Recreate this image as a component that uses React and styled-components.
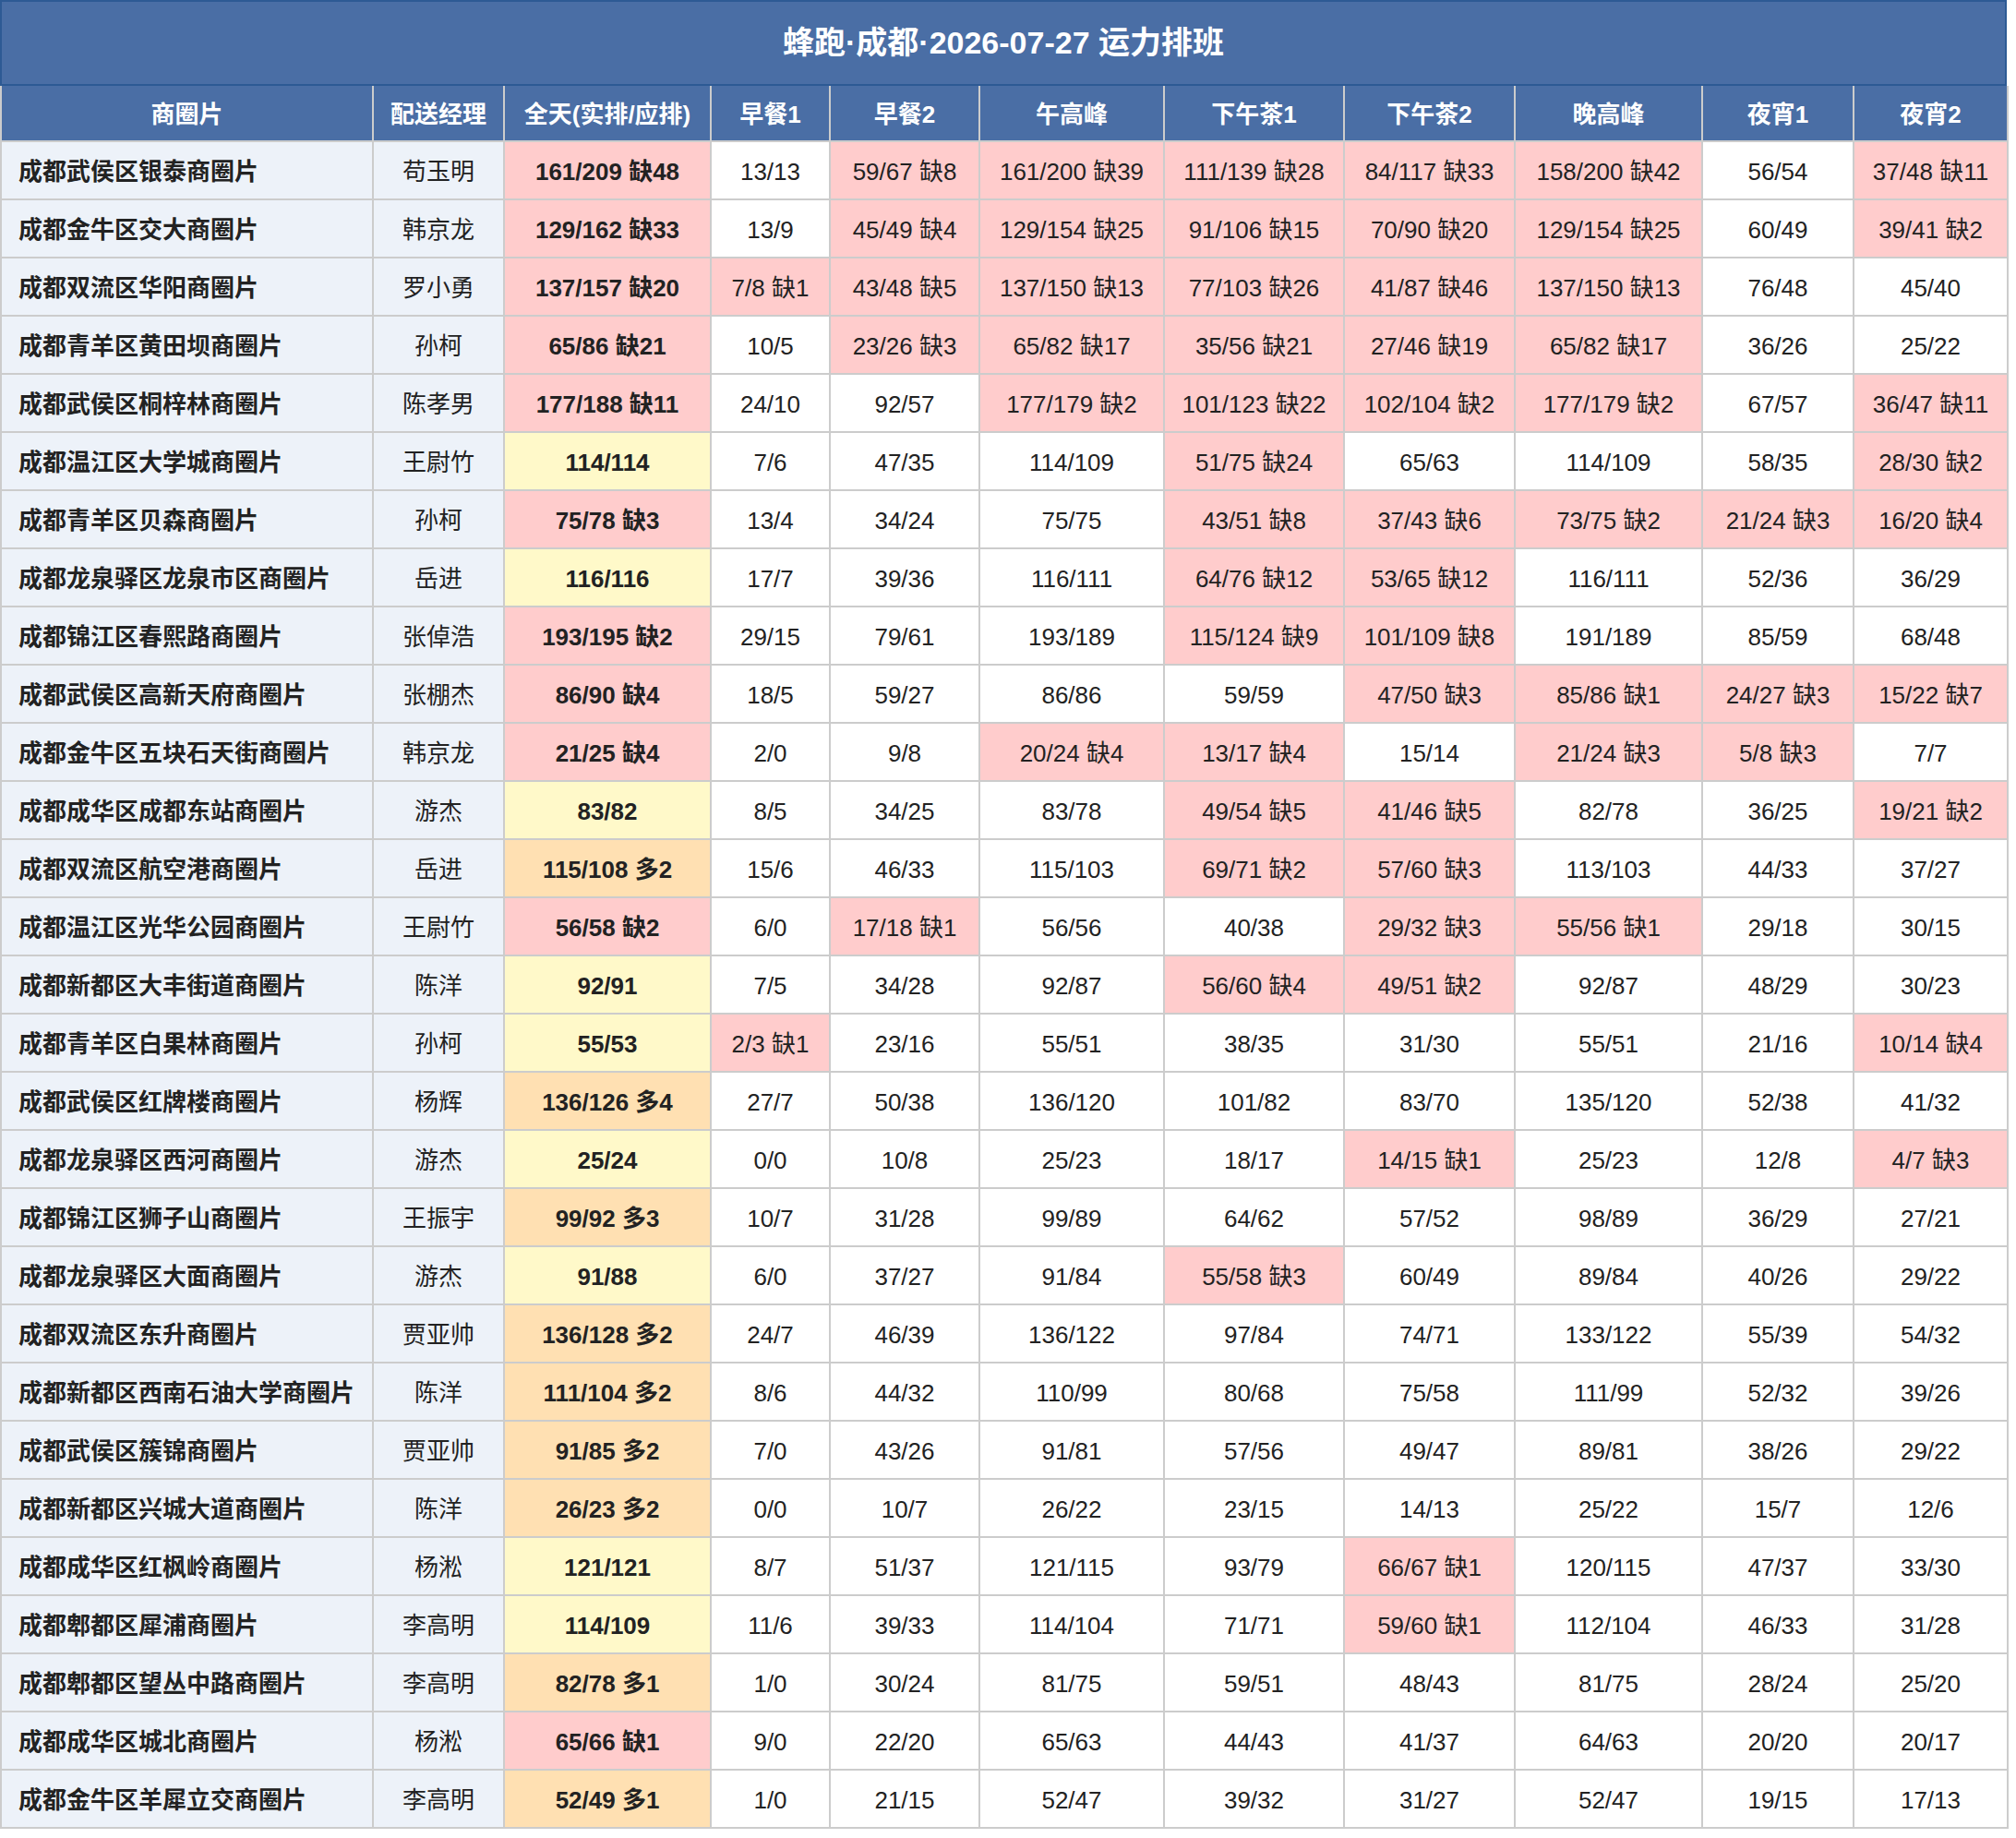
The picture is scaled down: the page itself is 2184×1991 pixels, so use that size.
import React from "react";
import styled, { createGlobalStyle } from "styled-components";

const Global = createGlobalStyle`
  html, body { margin: 0; padding: 0; background: #ffffff; }
  body { font-family: "Liberation Sans", "Noto Sans CJK SC", sans-serif; color: #222222; }
`;

const Sheet = styled.div`
  width: 2174px;
  display: flex;
  flex-direction: column;
`;

const Title = styled.div`
  box-sizing: border-box;
  height: 93px;
  display: flex;
  align-items: center;
  justify-content: center;
  background: #4a6ea5;
  border: 2px solid #2d5a94;
  color: #ffffff;
  font-size: 34px;
  line-height: 40px;
  font-weight: 700;
  padding-bottom: 2px;
`;

const Table = styled.table`
  width: 2174px;
  table-layout: fixed;
  border-collapse: collapse;
  font-size: 26px;
  line-height: 30px;
`;

const HeadCell = styled.th`
  height: 57px;
  padding: 2px 0 0;
  background: #4a6ea5;
  color: #ffffff;
  font-weight: 700;
  text-align: center;
  border: 2px solid #cccccc;
  border-top: none;
`;

const BG = {
  pink: "#ffcccc",
  yellow: "#fff9c9",
  orange: "#ffe0b2",
  side: "#edf2f9",
  plain: "#ffffff",
};

const Cell = styled.td`
  height: 59px;
  padding: ${(p) => (p.$left ? "2px 0 0 18px" : "2px 0 0")};
  background: ${(p) => BG[p.$tone]};
  text-align: ${(p) => (p.$left ? "left" : "center")};
  font-weight: ${(p) => (p.$bold ? 700 : 400)};
  border: 2px solid #cccccc;
  white-space: nowrap;
`;

const widths = [403, 142, 224, 129, 162, 200, 195, 185, 203, 164, 167];
const heads = ["商圈片", "配送经理", "全天(实排/应排)", "早餐1", "早餐2", "午高峰", "下午茶1", "下午茶2", "晚高峰", "夜宵1", "夜宵2"];

const rows = [
  ["成都武侯区银泰商圈片", "苟玉明", "161/209 缺48", "13/13", "59/67 缺8", "161/200 缺39", "111/139 缺28", "84/117 缺33", "158/200 缺42", "56/54", "37/48 缺11"],
  ["成都金牛区交大商圈片", "韩京龙", "129/162 缺33", "13/9", "45/49 缺4", "129/154 缺25", "91/106 缺15", "70/90 缺20", "129/154 缺25", "60/49", "39/41 缺2"],
  ["成都双流区华阳商圈片", "罗小勇", "137/157 缺20", "7/8 缺1", "43/48 缺5", "137/150 缺13", "77/103 缺26", "41/87 缺46", "137/150 缺13", "76/48", "45/40"],
  ["成都青羊区黄田坝商圈片", "孙柯", "65/86 缺21", "10/5", "23/26 缺3", "65/82 缺17", "35/56 缺21", "27/46 缺19", "65/82 缺17", "36/26", "25/22"],
  ["成都武侯区桐梓林商圈片", "陈孝男", "177/188 缺11", "24/10", "92/57", "177/179 缺2", "101/123 缺22", "102/104 缺2", "177/179 缺2", "67/57", "36/47 缺11"],
  ["成都温江区大学城商圈片", "王尉竹", "114/114", "7/6", "47/35", "114/109", "51/75 缺24", "65/63", "114/109", "58/35", "28/30 缺2"],
  ["成都青羊区贝森商圈片", "孙柯", "75/78 缺3", "13/4", "34/24", "75/75", "43/51 缺8", "37/43 缺6", "73/75 缺2", "21/24 缺3", "16/20 缺4"],
  ["成都龙泉驿区龙泉市区商圈片", "岳进", "116/116", "17/7", "39/36", "116/111", "64/76 缺12", "53/65 缺12", "116/111", "52/36", "36/29"],
  ["成都锦江区春熙路商圈片", "张倬浩", "193/195 缺2", "29/15", "79/61", "193/189", "115/124 缺9", "101/109 缺8", "191/189", "85/59", "68/48"],
  ["成都武侯区高新天府商圈片", "张棚杰", "86/90 缺4", "18/5", "59/27", "86/86", "59/59", "47/50 缺3", "85/86 缺1", "24/27 缺3", "15/22 缺7"],
  ["成都金牛区五块石天街商圈片", "韩京龙", "21/25 缺4", "2/0", "9/8", "20/24 缺4", "13/17 缺4", "15/14", "21/24 缺3", "5/8 缺3", "7/7"],
  ["成都成华区成都东站商圈片", "游杰", "83/82", "8/5", "34/25", "83/78", "49/54 缺5", "41/46 缺5", "82/78", "36/25", "19/21 缺2"],
  ["成都双流区航空港商圈片", "岳进", "115/108 多2", "15/6", "46/33", "115/103", "69/71 缺2", "57/60 缺3", "113/103", "44/33", "37/27"],
  ["成都温江区光华公园商圈片", "王尉竹", "56/58 缺2", "6/0", "17/18 缺1", "56/56", "40/38", "29/32 缺3", "55/56 缺1", "29/18", "30/15"],
  ["成都新都区大丰街道商圈片", "陈洋", "92/91", "7/5", "34/28", "92/87", "56/60 缺4", "49/51 缺2", "92/87", "48/29", "30/23"],
  ["成都青羊区白果林商圈片", "孙柯", "55/53", "2/3 缺1", "23/16", "55/51", "38/35", "31/30", "55/51", "21/16", "10/14 缺4"],
  ["成都武侯区红牌楼商圈片", "杨辉", "136/126 多4", "27/7", "50/38", "136/120", "101/82", "83/70", "135/120", "52/38", "41/32"],
  ["成都龙泉驿区西河商圈片", "游杰", "25/24", "0/0", "10/8", "25/23", "18/17", "14/15 缺1", "25/23", "12/8", "4/7 缺3"],
  ["成都锦江区狮子山商圈片", "王振宇", "99/92 多3", "10/7", "31/28", "99/89", "64/62", "57/52", "98/89", "36/29", "27/21"],
  ["成都龙泉驿区大面商圈片", "游杰", "91/88", "6/0", "37/27", "91/84", "55/58 缺3", "60/49", "89/84", "40/26", "29/22"],
  ["成都双流区东升商圈片", "贾亚帅", "136/128 多2", "24/7", "46/39", "136/122", "97/84", "74/71", "133/122", "55/39", "54/32"],
  ["成都新都区西南石油大学商圈片", "陈洋", "111/104 多2", "8/6", "44/32", "110/99", "80/68", "75/58", "111/99", "52/32", "39/26"],
  ["成都武侯区簇锦商圈片", "贾亚帅", "91/85 多2", "7/0", "43/26", "91/81", "57/56", "49/47", "89/81", "38/26", "29/22"],
  ["成都新都区兴城大道商圈片", "陈洋", "26/23 多2", "0/0", "10/7", "26/22", "23/15", "14/13", "25/22", "15/7", "12/6"],
  ["成都成华区红枫岭商圈片", "杨淞", "121/121", "8/7", "51/37", "121/115", "93/79", "66/67 缺1", "120/115", "47/37", "33/30"],
  ["成都郫都区犀浦商圈片", "李高明", "114/109", "11/6", "39/33", "114/104", "71/71", "59/60 缺1", "112/104", "46/33", "31/28"],
  ["成都郫都区望丛中路商圈片", "李高明", "82/78 多1", "1/0", "30/24", "81/75", "59/51", "48/43", "81/75", "28/24", "25/20"],
  ["成都成华区城北商圈片", "杨淞", "65/66 缺1", "9/0", "22/20", "65/63", "44/43", "41/37", "64/63", "20/20", "20/17"],
  ["成都金牛区羊犀立交商圈片", "李高明", "52/49 多1", "1/0", "21/15", "52/47", "39/32", "31/27", "52/47", "19/15", "17/13"],
];

function toneFor(col, text) {
  if (col < 2) return "side";
  if (text.includes("缺")) return "pink";
  if (text.includes("多")) return "orange";
  if (col === 2) return "yellow";
  return "plain";
}

export default function App() {
  return (
    <>
      <Global />
      <Sheet>
        <Title>蜂跑·成都·2026-07-27 运力排班</Title>
        <Table>
          <colgroup>
            {widths.map((w, i) => (
              <col key={i} style={{ width: w }} />
            ))}
          </colgroup>
          <thead>
            <tr>
              {heads.map((h) => (
                <HeadCell key={h}>{h}</HeadCell>
              ))}
            </tr>
          </thead>
          <tbody>
            {rows.map((r) => (
              <tr key={r[0]}>
                {r.map((c, i) => (
                  <Cell key={i} $tone={toneFor(i, c)} $left={i === 0} $bold={i === 0 || i === 2}>
                    {c}
                  </Cell>
                ))}
              </tr>
            ))}
          </tbody>
        </Table>
      </Sheet>
    </>
  );
}
